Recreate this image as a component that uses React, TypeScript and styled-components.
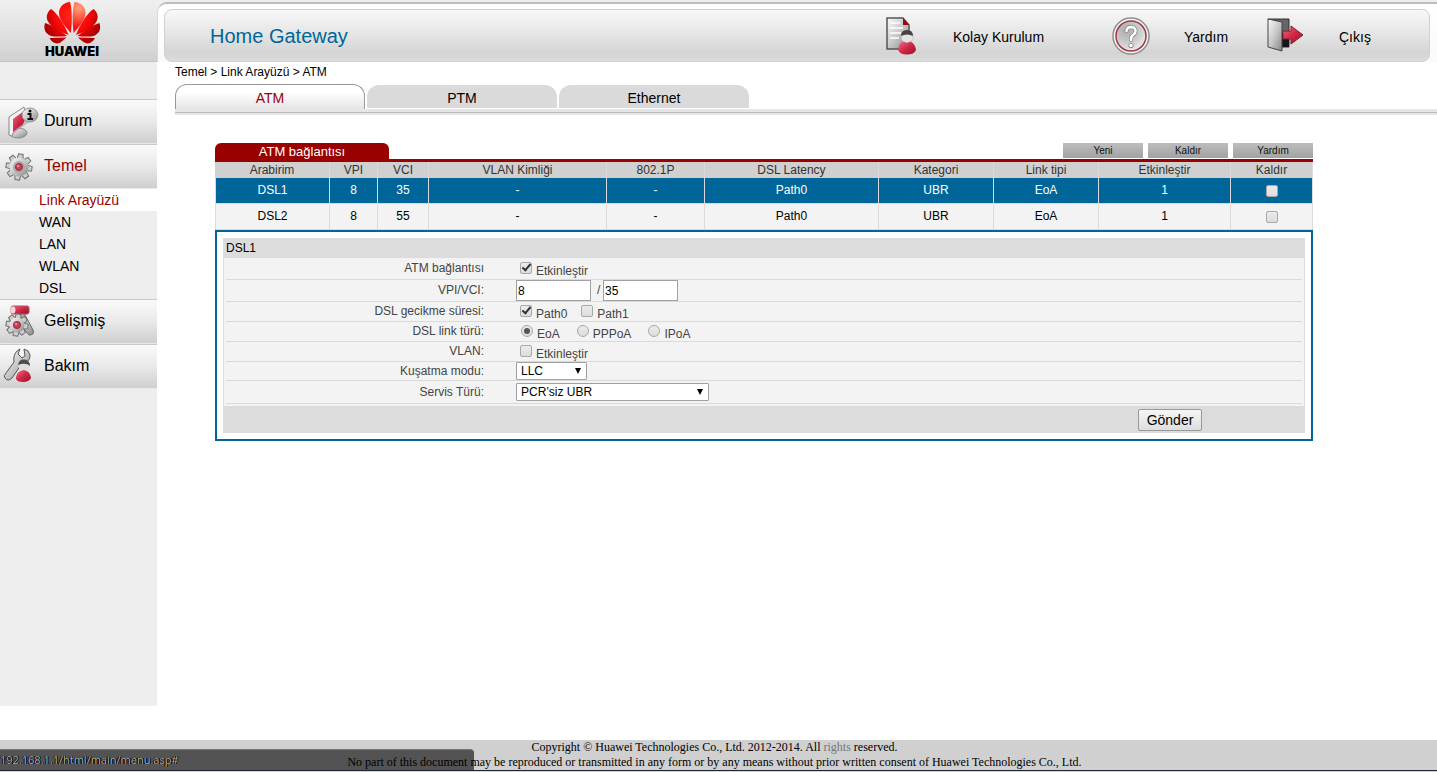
import React from "react";
import styled, { createGlobalStyle, css } from "styled-components";

const sans = `"Liberation Sans", Arial, sans-serif`;
const red = "#990000";
const blue = "#006699";
const barGradient = "linear-gradient(#fafafa, #e9e9e9 50%, #cfcfcf)";

const GlobalStyle = createGlobalStyle`
  *, *::before, *::after { box-sizing: border-box; }
  body { margin: 0; background: #fff; color: #000; font: 12px/15px ${sans}; }
  a { color: inherit; text-decoration: none; }
  button, input, select { font-family: inherit; }
  svg { display: block; }
`;

const Page = styled.div`
  display: flex;
  flex-direction: column;
  min-height: 100vh;
`;

const Columns = styled.div`
  display: flex;
  flex: 1;
`;

/* ---------- sidebar ---------- */

const Sidebar = styled.aside`
  flex: none;
  width: 157px;
  margin-bottom: 34px;
  background: #eee;
`;

const Brand = styled.div`
  height: 62px;
  margin-bottom: 37px;
  padding-left: 44px;
  background: linear-gradient(#f0f0f0, #e2e2e2 50%, #d0d0d0);
  border-bottom: 1px solid #c3c3c3;
`;

const MenuLink = styled.a<{ $active?: boolean }>`
  display: flex;
  align-items: center;
  height: 45px;
  border-top: 1px solid #c8c8c8;
  border-bottom: 1px solid #e8e8e8;
  background: ${barGradient};
  color: ${(p) => (p.$active ? red : "#000")};
  font-size: 16px;
  line-height: 20px;

  svg {
    flex: none;
    margin-right: 4px;
  }

  span {
    padding-bottom: 2px;
  }
`;

const SubLink = styled.a<{ $active?: boolean }>`
  display: block;
  padding-left: 39px;
  font-size: 14px;
  line-height: 22px;
  ${(p) => p.$active && css`
    background: #fff;
    color: ${red};
  `}
`;

/* ---------- header and tabs ---------- */

const Main = styled.main`
  flex: 1;
  min-width: 0;
`;

const HeaderBack = styled.div`
  height: 62px;
  padding-top: 2px;
  background: #efefef;
`;

const HeaderFrame = styled.header`
  height: 60px;
  padding: 5px 7px 0 6px;
  border-top: 2px solid #bdbdbd;
  border-left: 1px solid #d8d8d8;
  border-top-left-radius: 10px;
  background: linear-gradient(#fff, #fafafa);
`;

const HeaderBar = styled.div`
  display: flex;
  align-items: center;
  justify-content: space-between;
  height: 53px;
  padding-left: 45px;
  border: 1px solid #d0d0d0;
  border-radius: 8px;
  background: linear-gradient(#f8f8f8, #e6e6e6 45%, #d4d4d4 85%, #dcdcdc);
`;

const Product = styled.h1`
  margin: 0;
  color: ${blue};
  font-size: 20px;
  line-height: 24px;
  font-weight: normal;
`;

const Tools = styled.nav`
  display: grid;
  grid-template-columns: 231px 155px 162px;
`;

const ToolLink = styled.a`
  display: flex;
  align-items: center;
  gap: 34px;
  font-size: 14px;
  line-height: 20px;

  span {
    padding-top: 2px;
  }
`;

const Body = styled.div`
  padding-left: 18px;
`;

const Breadcrumb = styled.div`
  height: 22px;
  line-height: 20px;
`;

const Tabs = styled.nav`
  display: flex;
  gap: 2px;
  height: 25px;
`;

const Tab = styled.a<{ $active?: boolean }>`
  width: 190px;
  height: 23px;
  margin-top: 1px;
  border-radius: 12px 12px 0 0;
  background: #dadada;
  font-size: 14px;
  line-height: 26px;
  text-align: center;
  ${(p) => p.$active && css`
    height: 25px;
    margin-top: 0;
    border: 1px solid #999;
    border-bottom: 0;
    background: linear-gradient(#fff 30%, #e6e6e6);
    color: ${red};
  `}
`;

const TabRule = styled.div`
  height: 6px;
  border: solid #e6e6e6;
  border-width: 3px 0 2px;
  background: #bababa;
`;

/* ---------- connection table ---------- */

const Content = styled.section`
  margin: 28px 124px 0 40px;
`;

const TitleRow = styled.div`
  display: flex;
  align-items: flex-start;
  gap: 5px;
  border-bottom: 3px solid ${red};
`;

const Title = styled.h2`
  width: 174px;
  height: 16px;
  margin: 0 auto 0 0;
  border-radius: 6px 6px 0 0;
  background: ${red};
  color: #fff;
  font-size: 13px;
  line-height: 17px;
  font-weight: normal;
  text-align: center;
`;

const SmallButton = styled.button`
  width: 80px;
  height: 15px;
  padding: 0;
  border: 0;
  background: linear-gradient(#bdbdbd, #a2a2a2);
  color: #111;
  font-size: 10px;
  line-height: 15px;
`;

const Table = styled.table`
  width: 100%;
  table-layout: fixed;
  border-spacing: 0;
  text-align: center;
`;

const Th = styled.th`
  height: 16px;
  padding: 0;
  border-right: 1px solid #dadada;
  background: #d0d0d0;
  color: #333;
  font-weight: normal;
  line-height: 16px;
`;

const Row = styled.tr<{ $selected?: boolean }>`
  background: ${(p) => (p.$selected ? blue : "#f3f3f3")};
  color: ${(p) => (p.$selected ? "#fff" : "#000")};
`;

const Td = styled.td`
  height: 26px;
  padding: 0;
  border-right: 1px solid #dadada;
  border-bottom: 1px solid #dadada;

  &:first-child {
    border-left: 1px solid #dadada;
  }

  input {
    display: block;
    margin: 0 auto;
  }
`;

/* ---------- form ---------- */

const Panel = styled.form`
  padding: 6px;
  border: 2px solid ${blue};
`;

const PanelTitle = styled.h3`
  height: 20px;
  margin: 0;
  padding-left: 3px;
  background: #dcdcdc;
  font-size: 12px;
  line-height: 20px;
  font-weight: normal;
`;

const Fields = styled.div`
  padding: 0 2px 2px;
  border: solid #dcdcdc;
  border-width: 0 1px;
  background: #f3f3f3;
  color: #444;
`;

const Field = styled.div<{ $h: number }>`
  display: flex;
  align-items: center;
  height: ${(p) => p.$h}px;
  border-bottom: 1px solid #dadada;
`;

const FieldName = styled.label`
  flex: none;
  width: 258px;
  margin-right: 32px;
  text-align: right;
`;

const Choice = styled.label<{ $gap?: number }>`
  display: flex;
  align-items: flex-start;
  gap: 4px;
  height: 15px;
  margin-right: ${(p) => p.$gap ?? 0}px;
  padding-left: 4px;

  span {
    padding-top: 3px;
  }
`;

const Check = styled.input.attrs({ type: "checkbox" })`
  appearance: none;
  display: grid;
  width: 12px;
  height: 12px;
  margin: 1px 0 0;
  border: 1px solid #a8a8a8;
  border-radius: 2px;
  background: linear-gradient(#ececec, #dcdcdc);

  &:checked::after {
    content: "";
    width: 5px;
    height: 9px;
    margin: -1px 0 0 3px;
    border: solid #333;
    border-width: 0 2px 2px 0;
    transform: rotate(40deg);
  }
`;

const Radio = styled.input.attrs({ type: "radio" })`
  appearance: none;
  display: grid;
  place-items: center;
  width: 12px;
  height: 12px;
  margin: 1px 0 0 1px;
  border: 1px solid #a8a8a8;
  border-radius: 50%;
  background: linear-gradient(#ececec, #dcdcdc);

  &:checked::after {
    content: "";
    width: 6px;
    height: 6px;
    border-radius: 50%;
    background: #555;
  }
`;

const TextBox = styled.input.attrs({ type: "text" })`
  width: 75px;
  height: 21px;
  padding: 0 1px;
  border: 1px solid #a0a0a0;
  background: #fff;
  color: #000;
  font-size: 12px;
`;

const Slash = styled.span`
  width: 12px;
  padding-left: 6px;
`;

const SelectBox = styled.span<{ $w: number }>`
  position: relative;
  width: ${(p) => p.$w}px;
  height: 18px;

  &::after {
    content: "";
    position: absolute;
    top: 6px;
    right: 6px;
    border: solid transparent;
    border-width: 6px 3px 0;
    border-top-color: #000;
    pointer-events: none;
  }

  select {
    appearance: none;
    display: block;
    width: 100%;
    height: 18px;
    padding: 0 4px;
    border: 1px solid #a0a0a0;
    border-radius: 1px;
    background: #fff;
    color: #000;
    font-size: 12px;
    line-height: 16px;
  }
`;

const Actions = styled.div`
  display: flex;
  justify-content: flex-end;
  padding: 3px 103px 2px 0;
  background: #dcdcdc;
`;

const Submit = styled.button`
  width: 64px;
  height: 22px;
  padding: 0;
  border: 1px solid #999;
  border-radius: 2px;
  background: linear-gradient(#f6f6f6, #dedede);
  color: #000;
  font-size: 14px;
  line-height: 20px;
`;

/* ---------- footer ---------- */

const Footer = styled.footer`
  position: relative;
  border-bottom: 1px solid #c9d6e6;
  background: #d0d0d0;
  font: 12px/15px "Liberation Serif", "Times New Roman", serif;
  text-align: center;
`;

const Legal = styled.p`
  position: relative;
  z-index: 1;
  margin: 0;
  padding-right: 8px;
  border-bottom: 1px solid #22262c;

  span {
    color: #777;
  }
`;

const StatusBubble = styled.div`
  position: absolute;
  left: 0;
  bottom: 0;
  width: 474px;
  height: 22px;
  border-top: 1px solid #777;
  border-top-right-radius: 4px;
  background: #535353;
  color: #a9a9a9;
  font: 11px/20px "Open Sans", "Noto Sans", sans-serif;
  text-align: left;
  text-shadow: 1px 0 0 #000, -1px 0 0 #000;
`;

/* ---------- drawings ---------- */

const Gradients = () => (
  <svg width="0" height="0" aria-hidden="true">
    <defs>
      <linearGradient id="metal" x1="0" y1="0" x2="1" y2="1">
        <stop offset="0" stopColor="#fafafa" />
        <stop offset="0.5" stopColor="#c8c8c8" />
        <stop offset="1" stopColor="#858585" />
      </linearGradient>
      <linearGradient id="crimson" x1="0" y1="0" x2="1" y2="1">
        <stop offset="0" stopColor="#ea7084" />
        <stop offset="0.5" stopColor="#d02745" />
        <stop offset="1" stopColor="#98112b" />
      </linearGradient>
      <radialGradient id="petal" gradientUnits="userSpaceOnUse" cx="28" cy="14" r="30">
        <stop offset="0" stopColor="#ff2a1c" />
        <stop offset="0.55" stopColor="#f80808" />
        <stop offset="1" stopColor="#a80000" />
      </radialGradient>
      <radialGradient id="petalShine" gradientUnits="userSpaceOnUse" cx="35" cy="6" r="20">
        <stop offset="0" stopColor="#ffa27a" />
        <stop offset="1" stopColor="#fa1010" />
      </radialGradient>
      <radialGradient id="dial" cx="0.35" cy="0.3" r="0.8">
        <stop offset="0" stopColor="#aaa" />
        <stop offset="0.6" stopColor="#cfcfcf" />
        <stop offset="1" stopColor="#f2f2f2" />
      </radialGradient>
    </defs>
  </svg>
);

const outerPetals = (
  <>
    <path d="M24.500 33C21 23 13 11 7 7C3 10 1 16 5 21C9 27 17 30 24.500 33Z" />
    <path d="M23 34C17 29 6 22 1 21C-1 28 2 32 7 34C12 35 18 34.500 23 34Z" />
    <path d="M22.500 35.500L5.500 36C8 41 13 43 17 40C19 38.500 21 37 22.500 35.500Z" />
  </>
);
const innerPetal = "M26.800 31C28.500 20 28 6 26 0C20 0 15 5 15 11C15 18 22 25 26.800 31Z";

const Logo = () => (
  <svg width="58" height="58" viewBox="0 -2 58 58" role="img" aria-label="Huawei">
    <g fill="url(#petal)">
      <path d={innerPetal} />
      {outerPetals}
      <g transform="translate(56.500 0) scale(-1 1)">{outerPetals}</g>
    </g>
    <path
      fill="url(#petalShine)"
      d="M29.700 31C28 20 28.500 6 30.500 0C36.500 0 41.500 5 41.500 11C41.500 18 34.500 25 29.700 31Z"
    />
    <text x="28" y="54" textAnchor="middle" fontFamily="Inter, sans-serif" fontSize="13" fontWeight="900" fill="#000">
      HUAWEI
    </text>
  </svg>
);

const Icon = ({ size = 40, children }: { size?: number; children: React.ReactNode }) => (
  <svg width={size} height={size} viewBox={`0 0 ${size} ${size}`} aria-hidden="true">
    {children}
  </svg>
);

const teeth = [0, 45, 90, 135, 180, 225, 270, 315];
const Gear = ({ x, y, r }: { x: number; y: number; r: number }) => (
  <g transform={`translate(${x} ${y})`}>
    <g fill="#cfcfcf" stroke="#6f6f6f" strokeWidth="1">
      {teeth.map((a) => (
        <path key={a} d={`M-3.500 -4L-2.300 ${-r}H2.300L3.500 -4Z`} transform={`rotate(${a + 8})`} />
      ))}
    </g>
    <circle r={r - 3.5} fill="url(#metal)" />
    <circle r={r - 7} fill="#aaa" />
    <circle r="3.500" fill="#d23a52" stroke="#8d3140" />
    <circle cx="-1" cy="-1" r="1.200" fill="#ee8a9a" />
  </g>
);

const StatusIcon = () => (
  <Icon>
    <ellipse cx="18" cy="31" rx="9" ry="5" fill="url(#metal)" stroke="#888" />
    <path d="M9 15L24 5L27 20L13 31L12 34L9 33Z" fill="#f4f4f4" stroke="#888" />
    <path d="M13 17L24 9L26 20L13 30Z" fill="url(#crimson)" />
    <path d="M25 17L22 25L31 19Z" fill="#bbb" />
    <ellipse cx="30" cy="13" rx="8" ry="7" fill="url(#metal)" stroke="#999" />
    <circle cx="30" cy="9" r="1.500" fill="#111" />
    <path d="M27.500 12H30.500V17M27.500 17H33" stroke="#111" strokeWidth="2" fill="none" />
  </Icon>
);

const BasicIcon = () => (
  <Icon>
    <Gear x={19} y={20} r={13} />
  </Icon>
);

const AdvancedIcon = () => (
  <Icon>
    <path d="M19 11L25 13L33 28Q35 33 29 33L24 27Z" fill="url(#metal)" stroke="#666" />
    <rect x="19" y="9" width="6" height="7" fill="#aaa" stroke="#777" />
    <rect x="11" y="4" width="18" height="8" rx="2" fill="url(#crimson)" stroke="#b05060" />
    <ellipse cx="13" cy="8" rx="2.500" ry="3.500" fill="#f7d3d8" />
    <Gear x={17} y={23} r={11} />
  </Icon>
);

const MaintenanceIcon = () => (
  <Icon>
    <path
      d="M17 4L20 2L18 7L22 11L25 9L24 2Q29 3 30 8Q30 14 25 16L21 18L12 31Q8 35 5 31Q3 29 6 26L14 15Q13 8 17 4Z"
      fill="url(#metal)"
      stroke="#555"
    />
    <circle cx="24" cy="19" r="5.500" fill="#dedede" />
    <path d="M18 18Q19 12 24 12.500Q30 13 30 19Q26 15 18 18Z" fill="#4c4c4c" />
    <path d="M16 30Q17 24 24 23Q30 24 31 31Q29 35 23 35Q17 35 16 32Z" fill="url(#crimson)" />
  </Icon>
);

const SetupIcon = () => (
  <Icon size={38}>
    <path d="M6 1H22L28 8V32H6Z" fill="url(#metal)" stroke="#555" strokeWidth="1.500" />
    <path d="M22 1L28 8H22Z" fill="#a50010" />
    <path d="M9 6H19M9 11H22M9 16H20M9 21H18" stroke="#fff" strokeWidth="1.500" />
    <circle cx="26" cy="20" r="6" fill="#e4e4e4" stroke="#aaa" strokeWidth="0.500" />
    <path d="M20 19Q20 13 26 13Q32 13 32 19Q26 16 20 19Z" fill="#444" />
    <path d="M17 33Q18 25 23 24.500Q26 27 29 24.500Q34 26 35 33Q33 37.500 26 37.500Q19 37.500 17 33Z" fill="url(#crimson)" />
  </Icon>
);

const HelpIcon = () => (
  <Icon size={38}>
    <circle cx="19" cy="19" r="18" fill="#f6f6f6" stroke="#8f8f8f" strokeWidth="1.500" />
    <circle cx="19" cy="19" r="15" fill="url(#dial)" stroke="#9c3b45" strokeWidth="1.500" />
    <path d="M14.500 14Q15 10 19 10Q24 10.500 23.500 14.500Q23 17 20.500 18.500Q19 19.500 19 23" stroke="#8a8a8a" strokeWidth="4" fill="none" strokeLinecap="round" />
    <circle cx="19" cy="28.500" r="2.600" fill="#8a8a8a" />
    <path d="M14.500 14Q15 10 19 10Q24 10.500 23.500 14.500Q23 17 20.500 18.500Q19 19.500 19 23" stroke="#fff" strokeWidth="2.500" fill="none" strokeLinecap="round" />
    <circle cx="19" cy="28.500" r="1.800" fill="#fff" />
  </Icon>
);

const ExitIcon = () => (
  <Icon size={38}>
    <path d="M1 2H22V30H12Z" fill="#666" stroke="#333" />
    <path d="M15 16H22V30H15Z" fill="#151515" />
    <path d="M1 2L15 5V34L1 30Z" fill="url(#metal)" stroke="#444" />
    <path d="M16 14H24V9L36 18L24 27V22H16Z" fill="url(#crimson)" stroke="#8f1a2c" />
  </Icon>
);

/* ---------- data ---------- */

const columns: [string, number][] = [
  ["Arabirim", 115],
  ["VPI", 48],
  ["VCI", 51],
  ["VLAN Kimliği", 178],
  ["802.1P", 98],
  ["DSL Latency", 174],
  ["Kategori", 115],
  ["Link tipi", 105],
  ["Etkinleştir", 132],
  ["Kaldır", 82],
];

const rows = [
  ["DSL1", "8", "35", "-", "-", "Path0", "UBR", "EoA", "1"],
  ["DSL2", "8", "55", "-", "-", "Path0", "UBR", "EoA", "1"],
];

export default function App() {
  return (
    <Page>
      <GlobalStyle />
      <Gradients />
      <Columns>
        <Sidebar>
          <Brand>
            <Logo />
          </Brand>
          <nav>
            <MenuLink href="#durum"><StatusIcon /><span>Durum</span></MenuLink>
            <MenuLink href="#temel" $active><BasicIcon /><span>Temel</span></MenuLink>
            <SubLink href="#link" $active>Link Arayüzü</SubLink>
            <SubLink href="#wan">WAN</SubLink>
            <SubLink href="#lan">LAN</SubLink>
            <SubLink href="#wlan">WLAN</SubLink>
            <SubLink href="#dsl">DSL</SubLink>
            <MenuLink href="#gelismis"><AdvancedIcon /><span>Gelişmiş</span></MenuLink>
            <MenuLink href="#bakim"><MaintenanceIcon /><span>Bakım</span></MenuLink>
          </nav>
        </Sidebar>

        <Main>
          <HeaderBack>
            <HeaderFrame>
              <HeaderBar>
                <Product>Home Gateway</Product>
                <Tools>
                  <ToolLink href="#kurulum"><SetupIcon /><span>Kolay Kurulum</span></ToolLink>
                  <ToolLink href="#yardim"><HelpIcon /><span>Yardım</span></ToolLink>
                  <ToolLink href="#cikis"><ExitIcon /><span>Çıkış</span></ToolLink>
                </Tools>
              </HeaderBar>
            </HeaderFrame>
          </HeaderBack>

          <Body>
            <Breadcrumb>Temel &gt; Link Arayüzü &gt; ATM</Breadcrumb>
            <Tabs>
              <Tab href="#atm" $active>ATM</Tab>
              <Tab href="#ptm">PTM</Tab>
              <Tab href="#ethernet">Ethernet</Tab>
            </Tabs>
            <TabRule />

            <Content>
              <TitleRow>
                <Title>ATM bağlantısı</Title>
                <SmallButton type="button">Yeni</SmallButton>
                <SmallButton type="button">Kaldır</SmallButton>
                <SmallButton type="button">Yardım</SmallButton>
              </TitleRow>
              <Table>
                <colgroup>
                  {columns.map(([name, width]) => <col key={name} width={width} />)}
                </colgroup>
                <thead>
                  <tr>{columns.map(([name]) => <Th key={name} scope="col">{name}</Th>)}</tr>
                </thead>
                <tbody>
                  {rows.map((cells, r) => (
                    <Row key={cells[0]} $selected={r === 0}>
                      {cells.map((text, c) => <Td key={c}>{text}</Td>)}
                      <Td><Check aria-label={`Kaldır ${cells[0]}`} /></Td>
                    </Row>
                  ))}
                </tbody>
              </Table>

              <Panel onSubmit={(e) => e.preventDefault()}>
                <PanelTitle>DSL1</PanelTitle>
                <Fields>
                  <Field $h={22}>
                    <FieldName htmlFor="atm-on">ATM bağlantısı</FieldName>
                    <Choice><Check id="atm-on" defaultChecked /><span>Etkinleştir</span></Choice>
                  </Field>
                  <Field $h={22}>
                    <FieldName htmlFor="vpi">VPI/VCI:</FieldName>
                    <TextBox id="vpi" defaultValue="8" />
                    <Slash>/</Slash>
                    <TextBox aria-label="VCI" defaultValue="35" />
                  </Field>
                  <Field $h={20}>
                    <FieldName htmlFor="path0">DSL gecikme süresi:</FieldName>
                    <Choice $gap={10}><Check id="path0" defaultChecked /><span>Path0</span></Choice>
                    <Choice><Check /><span>Path1</span></Choice>
                  </Field>
                  <Field $h={20}>
                    <FieldName htmlFor="eoa">DSL link türü:</FieldName>
                    <Choice $gap={12}><Radio id="eoa" name="link" defaultChecked /><span>EoA</span></Choice>
                    <Choice $gap={12}><Radio name="link" /><span>PPPoA</span></Choice>
                    <Choice><Radio name="link" /><span>IPoA</span></Choice>
                  </Field>
                  <Field $h={20}>
                    <FieldName htmlFor="vlan">VLAN:</FieldName>
                    <Choice><Check id="vlan" /><span>Etkinleştir</span></Choice>
                  </Field>
                  <Field $h={19}>
                    <FieldName htmlFor="encap">Kuşatma modu:</FieldName>
                    <SelectBox $w={71}><select id="encap"><option>LLC</option></select></SelectBox>
                  </Field>
                  <Field $h={23}>
                    <FieldName htmlFor="service">Servis Türü:</FieldName>
                    <SelectBox $w={193}><select id="service"><option>PCR’siz UBR</option></select></SelectBox>
                  </Field>
                </Fields>
                <Actions>
                  <Submit type="submit">Gönder</Submit>
                </Actions>
              </Panel>
            </Content>
          </Body>
        </Main>
      </Columns>

      <Footer>
        <StatusBubble>192.168.1.1/html/main/menu.asp#</StatusBubble>
        <Legal>
          Copyright © Huawei Technologies Co., Ltd. 2012-2014. All <span>rights</span> reserved.
          <br />
          No part of this document may be reproduced or transmitted in any form or by any means without prior written consent of Huawei Technologies Co., Ltd.
        </Legal>
      </Footer>
    </Page>
  );
}
